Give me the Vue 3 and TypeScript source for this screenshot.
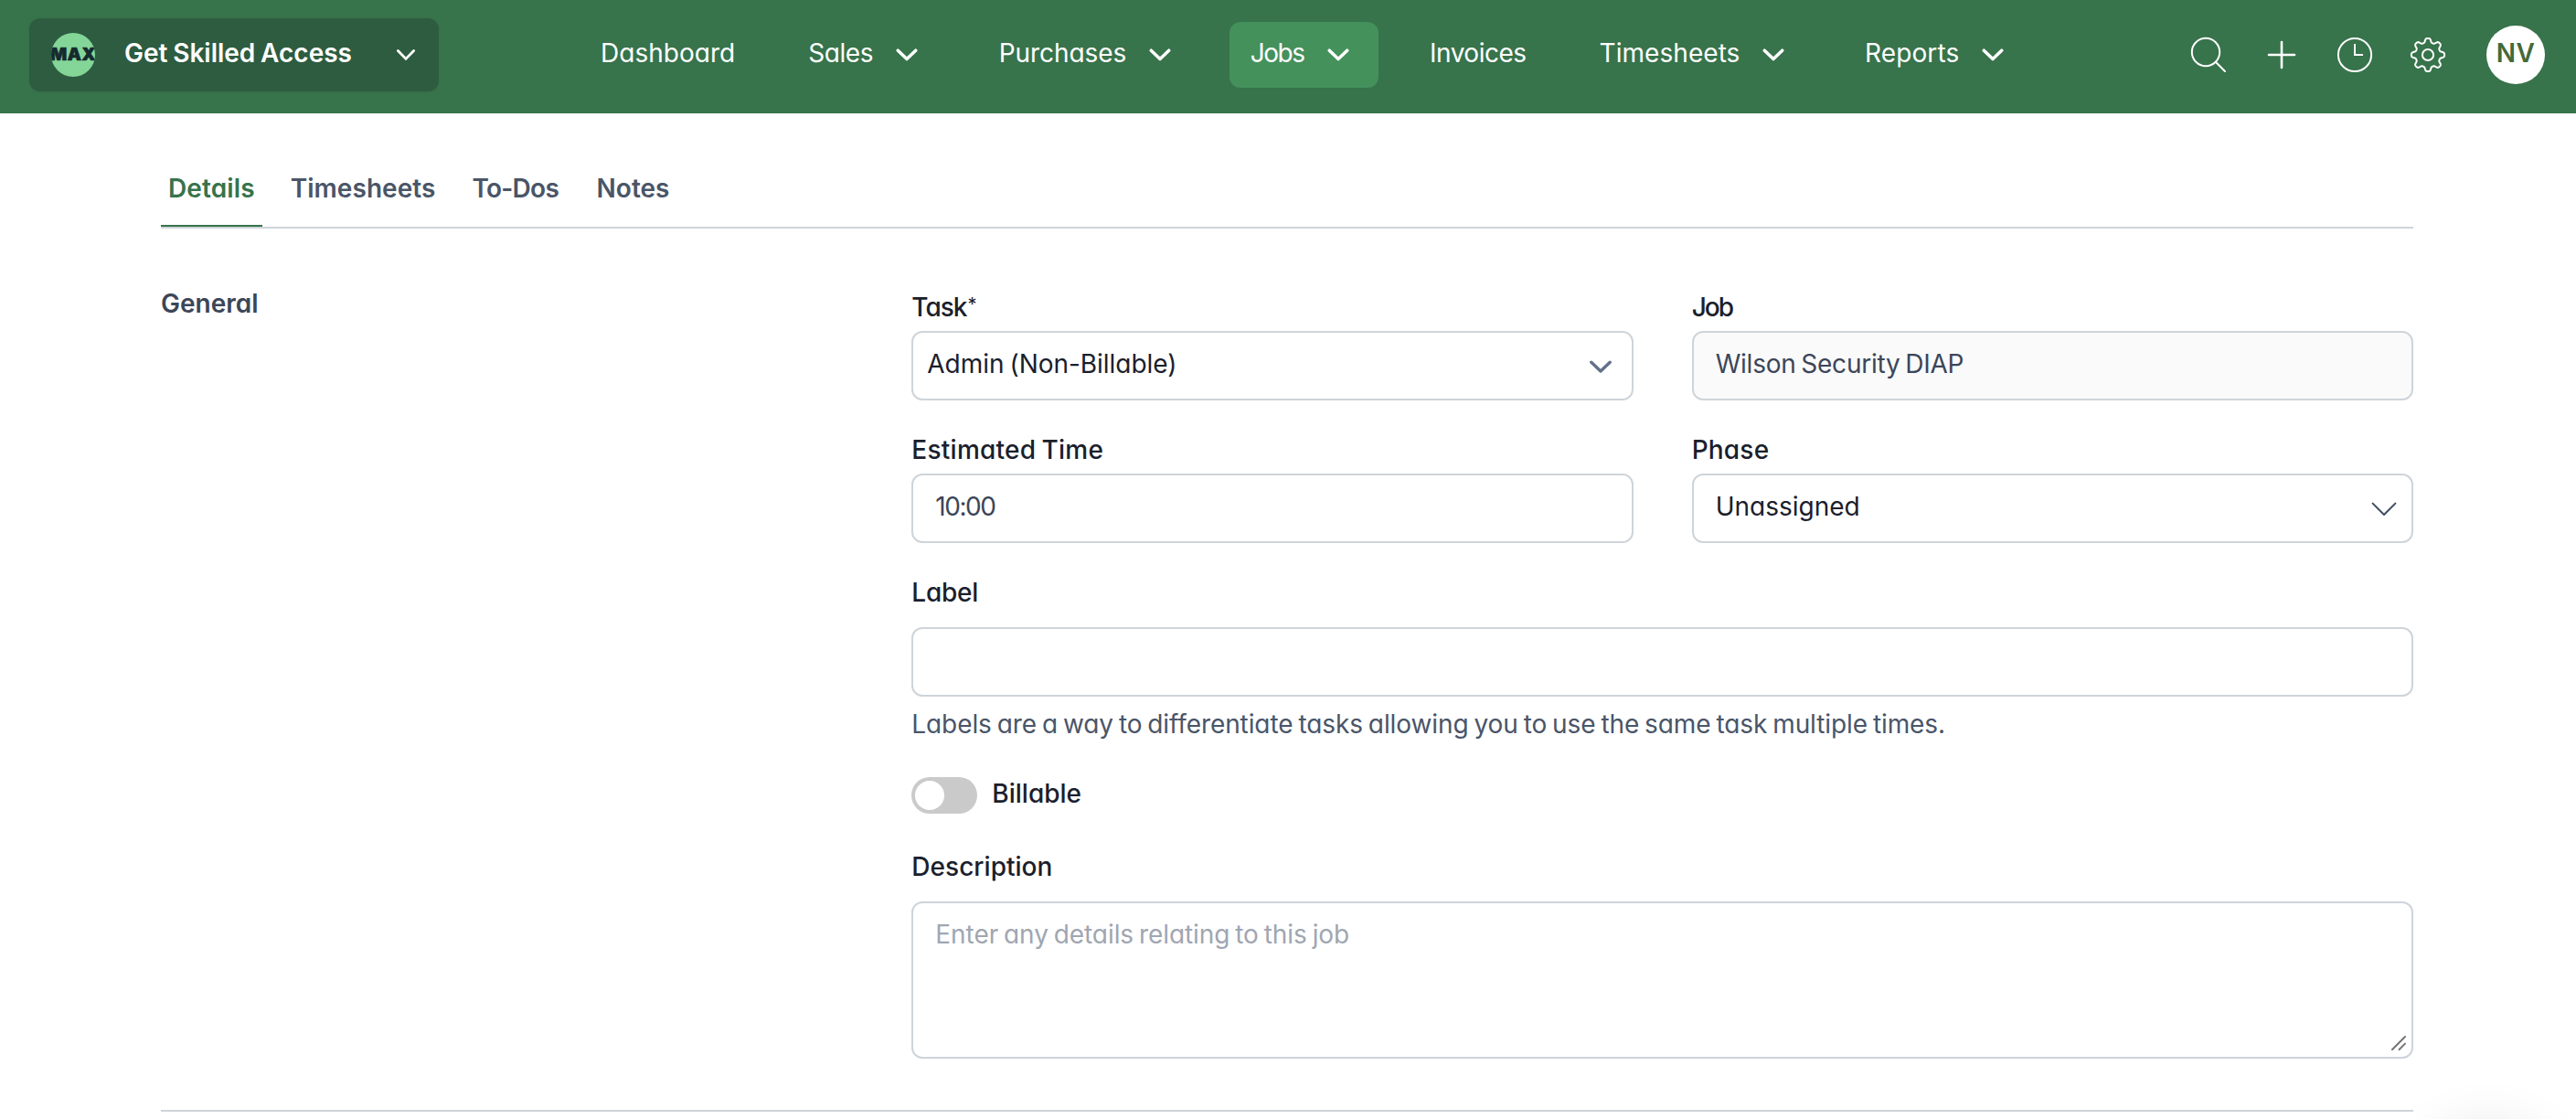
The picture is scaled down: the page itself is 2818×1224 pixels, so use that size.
<script setup lang="ts">
import { ref } from 'vue'

interface NavItem {
  key: string
  label: string
  menu: boolean
}

const nav: NavItem[] = [
  { key: 'dashboard', label: 'Dashboard', menu: false },
  { key: 'sales', label: 'Sales', menu: true },
  { key: 'purchases', label: 'Purchases', menu: true },
  { key: 'jobs', label: 'Jobs', menu: true },
  { key: 'invoices', label: 'Invoices', menu: false },
  { key: 'nav-timesheets', label: 'Timesheets', menu: true },
  { key: 'reports', label: 'Reports', menu: true },
]
const activeNav = ref('jobs')

const tabs = [
  { key: 'details', label: 'Details' },
  { key: 'timesheets', label: 'Timesheets' },
  { key: 'todos', label: 'To-Dos' },
  { key: 'notes', label: 'Notes' },
]
const activeTab = ref('details')

const job = ref('Wilson Security DIAP')
const estimate = ref('10:00')
const label = ref('')
const description = ref('')

// Outline of the eight-toothed settings cog, centred in a 40x40 box.
function cogPath(): string {
  const steps = 240
  const points: string[] = []
  for (let i = 0; i < steps; i++) {
    const a = (i / steps) * Math.PI * 2
    const tooth = Math.tanh(1.7 * Math.cos(8 * a)) / Math.tanh(1.7)
    const r = 15.9 + 2.2 * tooth
    points.push(`${(20 + r * Math.cos(a)).toFixed(2)} ${(20 + r * Math.sin(a)).toFixed(2)}`)
  }
  return `M${points.join('L')}Z`
}
const cog = cogPath()
</script>

<template>
  <div class="page">
    <header class="topbar">
      <button class="company" type="button">
        <span class="logo"><span>MAX</span></span>
        <span class="company-name">Get Skilled Access</span>
        <svg class="company-chevron" width="20" height="12" viewBox="0 0 20 12">
          <path d="M1.4 1.5 10 10.4 18.6 1.5" />
        </svg>
      </button>

      <nav class="nav">
        <a v-for="item in nav" :key="item.key" class="nav-item" :class="[item.key, { active: item.key === activeNav, menu: item.menu }]">
          <span>{{ item.label }}</span>
          <svg v-if="item.menu" width="24" height="14" viewBox="0 0 24 14">
            <path d="M2.3 2.2 12 11.6 21.7 2.2" />
          </svg>
        </a>
      </nav>

      <div class="actions">
        <svg viewBox="0 0 40 40"><circle cx="17" cy="17" r="15.2" /><path d="M27.8 27.8 38 38" /></svg>
        <svg viewBox="0 0 40 40" class="plus"><path d="M20 6V34M6 20H34" /></svg>
        <svg viewBox="0 0 40 40"><circle cx="20" cy="20" r="18.1" /><path class="butt" d="M20 8V20H29" /></svg>
        <svg viewBox="0 0 40 40"><path :d="cog" /><circle cx="20" cy="20" r="6.1" /></svg>
        <span class="avatar">NV</span>
      </div>
    </header>

    <main class="content">
      <div class="tabs">
        <a v-for="tab in tabs" :key="tab.key" class="tab" :class="[tab.key, { active: tab.key === activeTab }]">{{ tab.label }}</a>
      </div>

      <section class="section">
        <h2>General</h2>
        <div class="form">
          <div class="field">
            <label class="lbl task">Task<span class="star">*</span></label>
            <div class="box select tight">
              <span class="v-task">Admin (Non-Billable)</span>
              <svg class="bold" width="24" height="14" viewBox="0 0 24 14"><path d="M1.8 2.2 12 12 22.2 2.2" /></svg>
            </div>
          </div>
          <div class="field">
            <label class="lbl job">Job</label>
            <input v-model="job" class="box v-job" disabled />
          </div>
          <div class="field">
            <label class="lbl est">Estimated Time</label>
            <input v-model="estimate" class="box v-est" />
          </div>
          <div class="field">
            <label class="lbl phase">Phase</label>
            <div class="box select wide">
              <span class="v-phase">Unassigned</span>
              <svg width="28" height="16" viewBox="0 0 28 16"><path d="M1.6 1.6 14 14 26.4 1.6" /></svg>
            </div>
          </div>
          <div class="field full">
            <label class="lbl spaced lab">Label</label>
            <input v-model="label" class="box" />
            <p class="help">Labels are a way to differentiate tasks allowing you to use the same task multiple times.</p>
          </div>
          <div class="toggle-row full">
            <span class="toggle"><i></i></span>
            <span class="lbl">Billable</span>
          </div>
          <div class="field full desc">
            <label class="lbl spaced d">Description</label>
            <div class="area-wrap">
              <textarea v-model="description" placeholder="Enter any details relating to this job"></textarea>
              <svg class="grip" width="16" height="16" viewBox="0 0 16 16"><path d="M1 15 15 1M8.6 15 15 8.6" /></svg>
            </div>
          </div>
        </div>
      </section>
    </main>
    <div class="bubble"></div>
  </div>
</template>

<style>
body {
  background: #fff;
}
</style>

<style scoped>
.page {
  position: relative;
  height: 1224px;
  overflow: hidden;
  background: #fff;
  font-family: Inter, 'Liberation Sans', sans-serif;
  font-size: 28px;
  line-height: 40px;
  font-feature-settings: 'cv11';
  color: #1a202c;
}
svg {
  display: block;
  flex: none;
  fill: none;
  stroke: currentColor;
  stroke-linecap: round;
  stroke-linejoin: round;
}

/* Top bar */
.topbar {
  box-sizing: border-box;
  display: flex;
  align-items: flex-start;
  height: 124px;
  padding: 20px 34px 0 32px;
  background: #37734b;
  color: #fff;
}
.company {
  box-sizing: border-box;
  display: flex;
  align-items: center;
  width: 448px;
  height: 80px;
  padding: 0 26px 0 24px;
  border: 0;
  border-radius: 12px;
  background: #2d5c40;
  box-shadow: 0 1px 3px rgba(0, 0, 0, 0.06);
  color: inherit;
  font: inherit;
  font-feature-settings: inherit;
}
.logo {
  display: flex;
  align-items: center;
  justify-content: center;
  width: 48px;
  height: 48px;
  border-radius: 50%;
  background: #84d698;
  overflow: hidden;
  color: #152b2e;
  font-size: 19px;
  font-weight: 900;
  line-height: 48px;
  letter-spacing: 0.6px;
  -webkit-text-stroke: 0.7px #152b2e;
}
.company-name {
  margin: -4px auto 0 32px;
  font-weight: 600;
  word-spacing: -1.3px;
}
.company-chevron {
  stroke-width: 2.8;
}
.nav {
  display: flex;
  gap: 32px;
  margin: 4px 0 0 153px;
}
.nav-item {
  display: flex;
  align-items: center;
  gap: 24.5px;
  height: 72px;
  padding: 0 24px;
  border-radius: 12px;
}
.nav-item.menu {
  padding-right: 32px;
}
.nav-item.active {
  background: #44915c;
}
.nav-item span {
  margin-top: -4px;
}
.nav-item svg {
  stroke-width: 3.5;
}
.nav-item.dashboard { letter-spacing: 0.02px; }
.nav-item.sales { letter-spacing: -0.4px; padding-right: 33px; }
.nav-item.purchases { letter-spacing: -0.05px; }
.nav-item.jobs { letter-spacing: -1.5px; }
.nav-item.jobs span { margin-left: -1px; margin-right: 1px; }
.nav-item.invoices { letter-spacing: -0.5px; }
.nav-item.nav-timesheets { letter-spacing: 0.05px; }
.nav-item.reports { letter-spacing: 0.15px; }
.actions {
  display: flex;
  align-items: center;
  gap: 40px;
  height: 80px;
  margin-left: auto;
}
.actions svg {
  width: 40px;
  height: 40px;
  stroke-width: 2;
}
.actions .plus {
  stroke-width: 2.6;
}
.actions .butt {
  stroke-linecap: butt;
  stroke-linejoin: miter;
}
.avatar {
  box-sizing: border-box;
  width: 64px;
  height: 64px;
  margin-left: 4px;
  padding-bottom: 4px;
  border-radius: 50%;
  background: #fff;
  color: #43693a;
  font-weight: 600;
  line-height: 60px;
  letter-spacing: 0.5px;
  text-align: center;
}

/* Tabs */
.content {
  width: 2464px;
  margin: 0 auto;
  padding: 62px 2px 0 0;
}
.tabs {
  display: flex;
  border-bottom: 2px solid #ced4da;
}
.tab {
  padding: 0 8px 20px;
  margin-right: 25px;
  border-bottom: 2px solid transparent;
  color: #4a5568;
  font-weight: 600;
}
.tab.active {
  border-color: #37734b;
  color: #37734b;
}
.tab.details { letter-spacing: 0.11px; }
.tab.todos { letter-spacing: -0.73px; padding-left: 7px; }
.tab.timesheets { padding-left: 6px; letter-spacing: 0.05px; }
.tab.notes { padding-left: 8.5px; }

/* Form section */
.section {
  display: grid;
  grid-template-columns: 1fr 2fr;
  height: 964px;
  border-bottom: 2px solid #ced4da;
}
h2 {
  margin: 62px 0 0;
  color: #3c4658;
  font-size: 28px;
  font-weight: 600;
  line-height: 40px;
}
.form {
  display: grid;
  grid-template-columns: 1fr 1fr;
  column-gap: 64px;
  row-gap: 34px;
  align-content: start;
  padding-top: 66px;
}
.full {
  grid-column: 1 / -1;
}
.lbl {
  display: block;
  margin-bottom: 6px;
  font-weight: 500;
}
.lbl.spaced { margin-bottom: 18px; }
.lbl.d { letter-spacing: 0.03px; }
.lbl.lab { letter-spacing: -0.25px; }
.lbl.task { letter-spacing: -1px; }
.star {
  margin-left: 1px;
  font-size: 20px;
  font-weight: 400;
  line-height: 1;
  vertical-align: 6px;
}
.lbl.job { letter-spacing: -1.9px; }
.lbl.est { letter-spacing: 0.25px; word-spacing: -1.5px; }
.lbl.phase { letter-spacing: 0.2px; }
.box {
  box-sizing: border-box;
  display: flex;
  align-items: center;
  width: 100%;
  height: 76px;
  padding: 0 24px 4px;
  border: 2px solid #ced4da;
  border-radius: 12px;
  background: #fff;
  outline: none;
  font: inherit;
  font-feature-settings: inherit;
  color: #3c4658;
}
.box:disabled {
  background: #fafafa;
}
.box.select {
  justify-content: space-between;
  color: #1a202c;
}
.box.tight { padding: 0 22px 4px 15px; }
.box.wide { padding-right: 16px; }
.select svg {
  margin-top: 5px;
  color: #3f4b5f;
  stroke-width: 2;
}
.select svg.bold {
  color: #64708a;
  stroke-width: 3.4;
}
.v-task { letter-spacing: -0.04px; word-spacing: -1.8px; }
.v-job { letter-spacing: -0.22px; word-spacing: -2px; }
.v-est { letter-spacing: -1.45px; }
.v-phase { letter-spacing: 0; }
.help {
  margin: 10px 0 0;
  color: #4a5568;
  letter-spacing: -0.09px;
  word-spacing: -1.85px;
  white-space: nowrap;
}
.toggle-row {
  display: flex;
  align-items: flex-start;
  gap: 16px;
  height: 42px;
  margin-top: 2px;
}
.toggle {
  box-sizing: border-box;
  width: 72px;
  height: 40px;
  margin-top: 2px;
  padding: 4px;
  border-radius: 20px;
  background: #cacaca;
}
.toggle i {
  display: block;
  width: 32px;
  height: 32px;
  border-radius: 50%;
  background: #fff;
}
.desc {
  margin-top: 4px;
}
.area-wrap {
  position: relative;
}
textarea {
  box-sizing: border-box;
  display: block;
  width: 100%;
  height: 172px;
  padding: 14px 24px;
  border: 2px solid #ced4da;
  border-radius: 12px;
  background: #fff;
  outline: none;
  resize: none;
  font: inherit;
  font-feature-settings: inherit;
  letter-spacing: -0.07px;
  word-spacing: -1.9px;
}
textarea::placeholder {
  color: #a0a6b1;
  opacity: 1;
}
.grip {
  position: absolute;
  right: 8px;
  bottom: 9px;
  color: #757575;
  stroke-width: 2;
}

/* Shadow of the chat launcher that sits just below the fold */
.bubble {
  position: absolute;
  left: 2662px;
  top: 1238px;
  width: 120px;
  height: 120px;
  border-radius: 50%;
  box-shadow: 0 4px 64px 4px rgba(0, 0, 0, 0.14);
}
</style>
